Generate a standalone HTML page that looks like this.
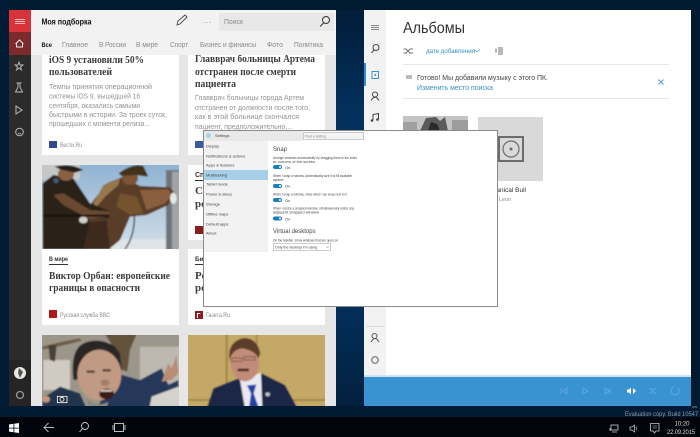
<!DOCTYPE html>
<html><head><meta charset="utf-8"><style>
html,body{margin:0;padding:0;background:#021a30;width:700px;height:437px;overflow:hidden}
svg{display:block}
text{font-family:"Liberation Sans","Noto Sans CJK SC",sans-serif}
.s{font-family:"Liberation Serif","Noto Serif CJK SC",serif;font-weight:bold;font-size:11px;fill:#3c3c3c}
.b{font-size:7.5px;fill:#929292}
.src{font-size:6px;fill:#8c8c8c}
.tab{font-size:7px;fill:#888}
.t{font-size:4px;fill:#444}
</style></head><body>
<svg width="700" height="437" viewBox="0 0 700 437" xmlns="http://www.w3.org/2000/svg">
<defs>
<linearGradient id="gap" x1="0" y1="0" x2="0" y2="1"><stop offset="0" stop-color="#021d38"/><stop offset=".25" stop-color="#03305c"/><stop offset=".7" stop-color="#033260"/><stop offset="1" stop-color="#02203e"/></linearGradient>
<linearGradient id="sky" x1="0" y1="0" x2="0" y2="1"><stop offset="0" stop-color="#8fb2d2"/><stop offset="1" stop-color="#d3dfe8"/></linearGradient>
<filter id="bl" x="-5%" y="-5%" width="110%" height="110%"><feGaussianBlur stdDeviation="2"/></filter>
<filter id="bl2" x="-5%" y="-5%" width="110%" height="110%"><feGaussianBlur stdDeviation=".3"/></filter>
<clipPath id="c1"><rect x="42" y="165" width="137" height="84"/></clipPath>
<clipPath id="c2"><rect x="42" y="335" width="137" height="71"/></clipPath>
<clipPath id="c3"><rect x="188" y="335" width="137" height="71"/></clipPath>
<clipPath id="c4"><rect x="403" y="116" width="65" height="15"/></clipPath>
<clipPath id="lw"><rect x="9" y="10" width="327" height="396"/></clipPath>
</defs>
<rect width="700" height="437" fill="#021a30"/>
<rect x="0" y="0" width="9" height="417" fill="#021c36"/>
<rect x="336" y="10" width="28" height="396" fill="url(#gap)"/>
<rect x="0" y="406" width="700" height="11" fill="#021b34"/>

<!-- left window -->
<g clip-path="url(#lw)">
<rect x="9" y="10" width="327" height="396" fill="#e6e6e6"/>
<rect x="42" y="55" width="137" height="100" fill="#fff"/>
<rect x="188" y="55" width="137" height="100" fill="#fff"/>
<text class="s" x="49" y="63" textLength="95" lengthAdjust="spacingAndGlyphs">iOS 9 установили 50%</text>
<text class="s" x="49" y="75" textLength="63" lengthAdjust="spacingAndGlyphs">пользователей</text>
<text class="b" x="49" y="89" textLength="103" lengthAdjust="spacingAndGlyphs">Темпы принятия операционной</text>
<text class="b" x="49" y="98.5" textLength="91" lengthAdjust="spacingAndGlyphs">системы iOS 9, вышедшей 16</text>
<text class="b" x="49" y="108" textLength="91" lengthAdjust="spacingAndGlyphs">сентября, оказались самыми</text>
<text class="b" x="49" y="117" textLength="118" lengthAdjust="spacingAndGlyphs">быстрыми в истории. За троек суток,</text>
<text class="b" x="49" y="126" textLength="101" lengthAdjust="spacingAndGlyphs">прошедших с момента релиза...</text>
<rect x="49" y="141" width="8" height="7" fill="#2c4a8c"/>
<text class="src" x="60" y="147" textLength="22" lengthAdjust="spacingAndGlyphs">Вести.Ru</text>
<text class="s" x="195" y="62" textLength="120" lengthAdjust="spacingAndGlyphs">Главврач больницы Артема</text>
<text class="s" x="195" y="75" textLength="101" lengthAdjust="spacingAndGlyphs">отстранен после смерти</text>
<text class="s" x="195" y="87" textLength="41" lengthAdjust="spacingAndGlyphs">пациента</text>
<text class="b" x="195" y="100" textLength="109" lengthAdjust="spacingAndGlyphs">Главврач больницы города Артем</text>
<text class="b" x="195" y="110" textLength="115" lengthAdjust="spacingAndGlyphs">отстранен от должности после того,</text>
<text class="b" x="195" y="119" textLength="104" lengthAdjust="spacingAndGlyphs">как в этой больнице скончался</text>
<text class="b" x="195" y="129" textLength="98" lengthAdjust="spacingAndGlyphs">пациент, предположительно,...</text>
<rect x="195" y="141" width="8" height="7" fill="#3a5a9c"/>

<!-- soldier photo -->
<rect x="42" y="165" width="137" height="84" fill="#fff"/>
<g clip-path="url(#c1)"><g transform="translate(40,160) scale(.3333)"><g filter="url(#bl)">
<rect x="0" y="10" width="420" height="260" fill="url(#sky)"/>
<rect x="0" y="10" width="120" height="50" fill="#c4c8c6"/>
<rect x="210" y="238" width="170" height="32" fill="#dfe4e8"/>
<rect x="378" y="30" width="40" height="240" fill="#6e747a"/>
<rect x="396" y="35" width="22" height="235" fill="#a0a4a8"/>
<path d="M150,135 L200,70 L250,50 L300,78 L390,82 L405,100 L385,135 L320,165 L270,170 L240,240 L210,265 L120,268 L125,170Z" fill="#5a3d26"/>
<path d="M240,100L290,110L310,160L270,165L230,140Z" fill="#74532f"/>
<path d="M300,90L385,88L395,105L375,130L320,150Z" fill="#8a5f40"/>
<path d="M120,190L200,180L210,268L120,268Z" fill="#3c2a1e"/>
<ellipse cx="270" cy="55" rx="24" ry="20" fill="#7c5438"/>
<path d="M236,40Q280,8 310,18L325,50L285,45L245,48Z" fill="#43321f"/>
<path d="M160,130L190,75L240,55L235,75L195,110L170,140Z" fill="#96784e"/>
<path d="M8,70 L40,45 L100,55 L150,130 L215,155 L205,175 L150,178 L130,268 L8,268Z" fill="#2a2016"/>
<path d="M40,105L70,100L150,150L215,155L205,170L150,178L70,135Z" fill="#6a4a30"/>
<rect x="8" y="164" width="200" height="6" fill="#15110c"/>
<ellipse cx="78" cy="42" rx="24" ry="20" fill="#8a6044"/>
<path d="M44,20Q90,8 130,30L105,38L60,28Z" fill="#261c12"/>
<circle cx="48" cy="62" r="8" fill="#3c5a7a"/>
<ellipse cx="400" cy="115" rx="10" ry="17" fill="#e6e8e8"/>
<ellipse cx="130" cy="180" rx="13" ry="10" fill="#d0d0cc"/>
<path d="M283,165Q285,225 255,268" stroke="#2c3034" stroke-width="4" fill="none"/>
</g></g></g>

<rect x="42" y="249" width="137" height="76" fill="#fff"/>
<rect x="188" y="165" width="137" height="75" fill="#fff"/>
<rect x="188" y="249" width="137" height="76" fill="#fff"/>
<text x="195" y="177" font-size="7" font-weight="bold" fill="#333">Спорт</text>
<rect x="195" y="180" width="20" height="1" fill="#333"/>
<text class="s" x="195" y="194">Совет</text>
<text class="s" x="195" y="207">россия</text>
<rect x="195" y="226" width="8" height="8" fill="#8c1c20"/>
<text x="49" y="261" font-size="6.5" font-weight="bold" fill="#333" textLength="19" lengthAdjust="spacingAndGlyphs">В мире</text>
<rect x="49" y="264" width="19" height="1" fill="#333"/>
<text class="s" x="49" y="279" textLength="121" lengthAdjust="spacingAndGlyphs">Виктор Орбан: европейские</text>
<text class="s" x="49" y="291" textLength="91" lengthAdjust="spacingAndGlyphs">границы в опасности</text>
<rect x="49" y="310" width="8" height="8" fill="#b01818"/>
<text class="src" x="60" y="317" textLength="50" lengthAdjust="spacingAndGlyphs">Русская служба BBC</text>
<text x="195" y="261" font-size="6.5" font-weight="bold" fill="#333">Бизнес</text>
<rect x="195" y="264" width="20" height="1" fill="#333"/>
<text class="s" x="195" y="279">Ростов</text>
<text class="s" x="195" y="291">рост</text>
<rect x="195" y="311" width="8" height="8" fill="#8c1c20"/>
<text x="196.500" y="318" font-size="7" font-weight="bold" fill="#fff">Г</text>
<text class="src" x="206" y="317" textLength="24" lengthAdjust="spacingAndGlyphs">Газета.Ru</text>

<!-- Ai photo -->
<g clip-path="url(#c2)"><g transform="translate(40,330) scale(.3333)"><g filter="url(#bl)">
<rect x="0" y="10" width="420" height="225" fill="#9c968a"/>
<rect x="10" y="90" width="80" height="90" fill="#cfcbc2"/>
<rect x="300" y="50" width="120" height="110" fill="#bdb9b0"/>
<rect x="330" y="170" width="90" height="60" fill="#d4d2cc"/>
<path d="M195,12L290,12L270,60L262,125L235,115L225,60Z" fill="#64523e"/>
<path d="M8,50Q60,35 120,25L125,32Q60,50 8,58Z" fill="#6e5a44"/>
<path d="M25,45L50,45L45,95L30,90Z" fill="#4a4038"/>
<path d="M8,205 L60,170 L120,190 L140,235 L8,235Z" fill="#243450"/>
<path d="M230,130 L300,150 L365,115 L385,165 L415,150 L415,170 L335,200 L328,235 L170,235Z" fill="#26375a"/>
<path d="M100,150Q90,60 130,40Q180,20 225,50Q250,85 242,135L100,150Z" fill="#2c2828"/>
<ellipse cx="178" cy="135" rx="66" ry="76" fill="#c09a82"/>
<path d="M112,110Q130,60 178,58Q225,58 242,110L240,70Q215,38 170,38Q125,42 108,80Z" fill="#2c2828"/>
<path d="M140,205Q170,235 205,215L200,235L145,235Z" fill="#8a8a80"/>
<ellipse cx="200" cy="192" rx="22" ry="16" fill="#3a1a18"/>
<rect x="183" y="180" width="32" height="5" fill="#e0d4c8"/>
<rect x="140" y="122" width="24" height="6" fill="#3a2a24"/>
<rect x="188" y="118" width="24" height="6" fill="#3a2a24"/>
<ellipse cx="195" cy="158" rx="13" ry="10" fill="#a87c66"/>
<path d="M365,155L385,100L395,115L410,75L415,130L395,150Z" fill="#b88c74"/>
<ellipse cx="18" cy="208" rx="12" ry="10" fill="#c09880"/>
</g>
<rect x="48" y="193" width="36" height="27" fill="#222c3a" opacity=".5"/>
<rect x="52" y="199" width="29" height="19" fill="none" stroke="#fff" stroke-width="2.500"/>
<circle cx="66" cy="208" r="6" fill="none" stroke="#fff" stroke-width="2.500"/>
</g></g>

<!-- Kosachev -->
<g clip-path="url(#c3)"><g transform="translate(185,330) scale(.3333)"><g filter="url(#bl)">
<rect x="0" y="10" width="425" height="225" fill="#c4a866"/>
<rect x="122" y="10" width="6" height="225" fill="#9e8448"/>
<rect x="212" y="10" width="6" height="225" fill="#a88e52"/>
<rect x="10" y="208" width="415" height="4" fill="#8e7640"/>
<path d="M65,235 L85,175 L160,145 L230,130 L300,165 L338,235Z" fill="#1c2646"/>
<path d="M165,150 L228,128 L232,235 L180,235Z" fill="#e9e9ef"/>
<path d="M186,166 L214,164 L206,190 L222,235 L192,235 L198,190Z" fill="#2340a6"/>
<ellipse cx="180" cy="98" rx="43" ry="56" fill="#c28c78"/>
<path d="M134,92Q125,40 170,25Q215,20 226,70L220,85Q210,60 170,55Q140,60 134,92Z" fill="#5c3c2a"/>
<rect x="140" y="84" width="32" height="10" fill="none" stroke="#6e5040" stroke-width="2.500"/>
<rect x="178" y="80" width="32" height="10" fill="none" stroke="#6e5040" stroke-width="2.500"/>
<rect x="158" y="116" width="34" height="8" fill="#4a2c20"/>
<ellipse cx="248" cy="193" rx="7" ry="6" fill="#bfc2c8"/>
</g></g></g>

<!-- header -->
<rect x="31" y="10" width="305" height="45" fill="#f2f2f2"/>
<rect x="219" y="13" width="115" height="18" fill="#e8e8e8"/>
<text x="41.500" y="24.500" font-size="8" font-weight="bold" fill="#111" textLength="50" lengthAdjust="spacingAndGlyphs">Моя подборка</text>
<path d="M177,25L178,21L185,15L187,17L180,24Z" fill="none" stroke="#444" stroke-width=".9"/>
<text x="203" y="23" font-size="7" fill="#666" textLength="8">...</text>
<text x="224" y="24" font-size="7" fill="#888" textLength="19" lengthAdjust="spacingAndGlyphs">Поиск</text>
<circle cx="326" cy="20" r="3.500" fill="none" stroke="#333"/><path d="M323.500,23L320,26.500" stroke="#333"/>
<text x="41.500" y="47" font-size="6.500" font-weight="bold" fill="#111" textLength="10.500" lengthAdjust="spacingAndGlyphs">Все</text>
<text class="tab" x="62" y="47" textLength="26" lengthAdjust="spacingAndGlyphs">Главное</text>
<text class="tab" x="99" y="47" textLength="27" lengthAdjust="spacingAndGlyphs">В России</text>
<text class="tab" x="136" y="47" textLength="22" lengthAdjust="spacingAndGlyphs">В мире</text>
<text class="tab" x="170" y="47" textLength="18" lengthAdjust="spacingAndGlyphs">Спорт</text>
<text class="tab" x="200" y="47" textLength="56" lengthAdjust="spacingAndGlyphs">Бизнес и финансы</text>
<text class="tab" x="267" y="47" textLength="16" lengthAdjust="spacingAndGlyphs">Фото</text>
<text class="tab" x="294" y="47" textLength="29" lengthAdjust="spacingAndGlyphs">Политика</text>

<!-- dark sidebar -->
<rect x="9" y="10" width="22" height="396" fill="#2b2b2b"/>
<rect x="9" y="360" width="22" height="46" fill="#252525"/>
<rect x="9" y="10" width="22" height="22" fill="#d6333a"/>
<rect x="9" y="32" width="22" height="23" fill="#7d2a2c"/>
<path d="M15,19.500h10M15,21.500h10M15,23.500h10" stroke="#f2b8ba" stroke-width=".9"/>
<path d="M15.500,44L19.500,40L23.500,44M16.500,43.500V47H22.500V43.500" fill="none" stroke="#eee"/>
<path d="M19,62L20,65H23L20.500,67L21.500,70L19,68L16.500,70L17.500,67L15,65H18Z" fill="none" stroke="#bbb" stroke-width=".9"/>
<path d="M18,83V87L15.500,92H22.500L20,87V83M16.500,83H21.500" fill="none" stroke="#bbb" stroke-width=".9"/>
<path d="M16,106L22,110L16,114Z" fill="none" stroke="#bbb"/>
<circle cx="19.500" cy="132" r="3.800" fill="none" stroke="#bbb"/>
<path d="M17.800,133Q19.500,135 21.200,133" fill="none" stroke="#bbb" stroke-width=".7"/>
<circle cx="20" cy="373" r="6" fill="#e8e8e4"/>
<path d="M19,368L23,372L20,378L18,373Z" fill="#555"/>
<circle cx="20" cy="395" r="3.500" fill="none" stroke="#999" stroke-width="1.300"/>
</g>

<!-- right window -->
<rect x="364" y="10" width="327" height="396" fill="#fff"/>
<rect x="364" y="10" width="22" height="365" fill="#f2f2f2"/>
<rect x="364" y="375" width="327" height="2" fill="#cfe4f2"/>
<rect x="364" y="377" width="327" height="29" fill="#3a93d1"/>
<path d="M371,25.500h8M371,27.500h8M371,29.500h8" stroke="#666" stroke-width=".8"/>
<circle cx="376" cy="47.500" r="3" fill="none" stroke="#444"/><path d="M374,50L371.500,53" stroke="#444"/>
<rect x="364" y="63" width="2" height="23" fill="#2f8fd0"/>
<rect x="372" y="71.500" width="6.500" height="7" fill="none" stroke="#3a93d1"/><circle cx="375.200" cy="75" r="1" fill="#3a93d1"/>
<circle cx="375" cy="94.500" r="2.500" fill="none" stroke="#444"/><path d="M371,100.500Q375,94 379,100.500" fill="none" stroke="#444"/>
<path d="M373,120V114.500L378.500,113.500V119" fill="none" stroke="#444"/><circle cx="372" cy="120.500" r="1.300" fill="#444"/><circle cx="377.500" cy="119.500" r="1.300" fill="#444"/>
<rect x="366" y="326" width="19" height="1" fill="#ddd"/>
<circle cx="374.500" cy="336" r="2.500" fill="none" stroke="#555"/><path d="M371,342Q375,335 379,342" fill="none" stroke="#555"/>
<circle cx="375" cy="360" r="3.300" fill="none" stroke="#777" stroke-width="1.200"/>
<text x="403" y="33" font-size="16" fill="#333" textLength="62" lengthAdjust="spacingAndGlyphs">Альбомы</text>
<path d="M403.500,49H406L410,53H413M403.500,53H406L410,49H413" fill="none" stroke="#444" stroke-width=".8"/>
<text x="426" y="53" font-size="6" fill="#3a8fc8" textLength="49" lengthAdjust="spacingAndGlyphs">дате добавления</text>
<path d="M474,49.500L477,52L480,49.500" fill="none" stroke="#3a8fc8" stroke-width=".6"/>
<path d="M498,48h5M498,50h5M498,52h5M498,54h5" stroke="#444" stroke-width=".8"/><path d="M496,48.500v4" stroke="#444" stroke-width=".8"/>
<rect x="403" y="64" width="266" height="1" fill="#e6e6e6"/>
<rect x="406" y="75" width="6" height="4" fill="#bbb"/>
<text x="417" y="80" font-size="7" fill="#444" textLength="131" lengthAdjust="spacingAndGlyphs">Готово! Мы добавили музыку с этого ПК.</text>
<text x="417" y="90" font-size="7" fill="#3a8fc8" textLength="76" lengthAdjust="spacingAndGlyphs">Изменить место поиска</text>
<path d="M658.500,79.500L663.500,84.500M663.500,79.500L658.500,84.500" stroke="#4a9ad0" stroke-width=".9"/>
<rect x="403" y="98" width="266" height="1" fill="#e6e6e6"/>
<g clip-path="url(#c4)"><g filter="url(#bl2)">
<rect x="403" y="116" width="65" height="15" fill="#c4c4c4"/>
<path d="M420,131L426,118L436,117L440,121L445,117L448,131Z" fill="#5a5a5a"/>
<path d="M428,131L431,122L437,124L440,131Z" fill="#2c2c2c"/>
<rect x="403" y="122" width="14" height="9" fill="#a0a0a0"/>
<rect x="452" y="120" width="16" height="11" fill="#9c9c9c"/>
</g></g>
<rect x="478" y="117" width="65" height="64" fill="#d9d9d9"/>
<rect x="499" y="137" width="24" height="24" fill="none" stroke="#6c6c6c" stroke-width="2"/>
<circle cx="511" cy="149" r="8" fill="none" stroke="#6c6c6c" stroke-width="1.200"/>
<circle cx="511" cy="149" r="1.500" fill="#6c6c6c"/>
<text x="526" y="192" font-size="6.500" fill="#333" text-anchor="end">Mechanical Bull</text>
<text x="511" y="201" font-size="5.500" fill="#888" text-anchor="end">Kings Of Leon</text>

<!-- player icons -->
<g fill="none" stroke="#62a9dc" stroke-width=".9">
<path d="M561,388V394M567,388L563,391L567,394Z"/>
<path d="M583,388L588,391L583,394Z"/>
<path d="M610,388V394M605,388L609,391L605,394Z"/>
<path d="M649,389H651L654,393H656M649,393H651L654,389H656"/>
<path d="M678,388A4,4 0 1 1 674,387"/>
</g>
<path d="M627,389.500H629L631,387.500V394.500L629,392.500H627Z" fill="#fff"/>
<path d="M633,388L636,391L633,394Z" fill="#fff"/>

<!-- misc bottom -->
<text x="692" y="408" font-size="4" fill="#8a9aa8">ow</text>
<rect x="0" y="417" width="700" height="20" fill="#02060c"/>
<text x="625" y="416" font-size="6" fill="#8a98a6" textLength="73" lengthAdjust="spacingAndGlyphs">Evaluation copy. Build 10547</text>

<!-- taskbar -->
<path d="M9,424.500L13.500,423.800V427.700H9ZM14.300,423.700L19,423V427.700H14.300ZM9,428.500H13.500V432.300L9,431.600ZM14.300,428.500H19V433L14.300,432.400Z" fill="#fff"/>
<path d="M54,427.500H44.500M48.500,423L44,427.500L48.500,432" fill="none" stroke="#bbb" stroke-width=".9"/>
<circle cx="85" cy="426" r="3.500" fill="none" stroke="#ccc" stroke-width=".9"/><path d="M82.500,428.500L79.500,432" stroke="#ccc" stroke-width=".9"/>
<rect x="114.500" y="423.500" width="9" height="8" fill="none" stroke="#ccc" stroke-width=".9"/>
<path d="M113,425V430M125,425V430" stroke="#ccc" stroke-width=".9"/>
<rect x="611" y="425" width="7" height="5" fill="none" stroke="#ccc" stroke-width=".8"/><path d="M612,432H617M610,428V431" stroke="#ccc" stroke-width=".8"/>
<path d="M630,427H632L634.500,425V432L632,430H630Z" fill="none" stroke="#ccc" stroke-width=".7"/><path d="M636.500,426.500V430.500" stroke="#999" stroke-width=".7"/>
<path d="M650.500,423.500H659V431H656L654.500,433L653,431H650.500Z" fill="none" stroke="#ccc" stroke-width=".8"/><path d="M652.500,426H657M652.500,428H657" stroke="#ccc" stroke-width=".6"/>
<text x="682" y="425.500" font-size="6" fill="#ddd" text-anchor="middle">10:20</text>
<text x="667" y="434" font-size="6" fill="#ddd" textLength="28" lengthAdjust="spacingAndGlyphs">22.09.2015</text>

<!-- settings window -->
<rect x="203.500" y="130.500" width="294" height="176" fill="#fff" stroke="#8a8a8a"/>
<rect x="204" y="131" width="99" height="10" fill="#e9e9e9"/>
<rect x="204" y="141" width="64" height="111" fill="#f2f2f2"/>
<rect x="204" y="170" width="64" height="10" fill="#a6d0e8"/>
<circle cx="208.500" cy="135.500" r="2.500" fill="#a8cfe6"/>
<text class="t" x="215" y="137">Settings</text>
<rect x="303.500" y="132.500" width="60" height="7" fill="#f4f4f4" stroke="#aaa" stroke-width=".6"/>
<text x="305" y="137.500" font-size="3.500" fill="#888">Find a setting</text>
<g filter="url(#bl2)">
<text class="t" x="206" y="147.500">Display</text>
<text class="t" x="206" y="157.500">Notifications &amp; actions</text>
<text class="t" x="206" y="166.500">Apps &amp; features</text>
<text class="t" x="206" y="176.500">Multitasking</text>
<text class="t" x="206" y="185.500">Tablet mode</text>
<text class="t" x="206" y="195.500">Power &amp; sleep</text>
<text class="t" x="206" y="205.500">Storage</text>
<text class="t" x="206" y="215.500">Offline maps</text>
<text class="t" x="206" y="225.500">Default apps</text>
<text class="t" x="206" y="234.500">About</text>
<text x="273" y="151" font-size="6" fill="#444">Snap</text>
<text class="t" x="273" y="159" textLength="84" lengthAdjust="spacingAndGlyphs">Arrange windows automatically by dragging them to the sides</text>
<text class="t" x="273" y="163">or corners of the screen</text>
<text class="t" x="285" y="169">On</text>
<text class="t" x="273" y="177" textLength="79" lengthAdjust="spacingAndGlyphs">When I snap a window, automatically size it to fill available</text>
<text class="t" x="273" y="181">space</text>
<text class="t" x="285" y="187.500">On</text>
<text class="t" x="273" y="195.500" textLength="74" lengthAdjust="spacingAndGlyphs">When I snap a window, show what I can snap next to it</text>
<text class="t" x="285" y="202">On</text>
<text class="t" x="273" y="209.500" textLength="81" lengthAdjust="spacingAndGlyphs">When I resize a snapped window, simultaneously resize any</text>
<text class="t" x="273" y="213.500">adjacent snapped window</text>
<text class="t" x="285" y="220.500">On</text>
<text x="273" y="233" font-size="6" fill="#444">Virtual desktops</text>
<text class="t" x="273" y="241.500" textLength="65" lengthAdjust="spacingAndGlyphs">On the taskbar, show windows that are open on</text>
<text x="275" y="248.500" font-size="3.600" fill="#444">Only the desktop I'm using</text>
</g>
<g fill="#1a7fc0">
<rect x="273" y="165" width="9" height="4" rx="2"/>
<rect x="273" y="184" width="9" height="4" rx="2"/>
<rect x="273" y="198" width="9" height="4" rx="2"/>
<rect x="273" y="216.500" width="9" height="4" rx="2"/>
</g>
<g fill="#fff"><circle cx="280" cy="167" r="1"/><circle cx="280" cy="186" r="1"/><circle cx="280" cy="200" r="1"/><circle cx="280" cy="218.500" r="1"/></g>
<rect x="273.500" y="243.500" width="57" height="7" fill="none" stroke="#aaa" stroke-width=".6"/>
<path d="M326,246.500L327.500,248L329,246.500" fill="none" stroke="#777" stroke-width=".5"/>
</svg>
</body></html>
